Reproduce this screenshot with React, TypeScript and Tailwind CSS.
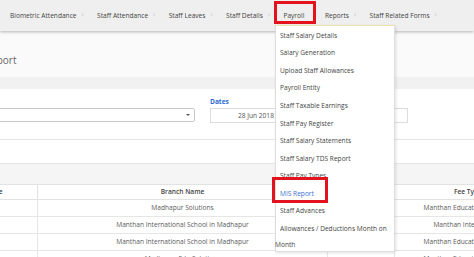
import React from "react";

const navItems = [
  "Biometric Attendance",
  "Staff Attendance",
  "Staff Leaves",
  "Staff Details",
  "Payroll",
  "Reports",
  "Staff Related Forms",
];

const menuItems = [
  "Staff Salary Details",
  "Salary Generation",
  "Upload Staff Allowances",
  "Payroll Entity",
  "Staff Taxable Earnings",
  "Staff Pay Register",
  "Staff Salary Statements",
  "Staff Salary TDS Report",
  "Staff Pay Types",
  "MIS Report",
  "Staff Advances",
];

const rows = [
  ["1", "Madhapur Solutions", "", "Manthan Educational Society"],
  ["2", "Manthan International School in Madhapur", "", "Manthan International"],
  ["3", "Manthan International School in Madhapur", "", "Manthan Educational Society"],
  ["4", "Madhapur Edu Solutions", "", "Manthan Educational Society"],
];

export default function App() {
  return (
    <div className="relative w-[474px] h-[257px] overflow-hidden bg-white font-['Open_Sans',sans-serif] text-[6.6px] text-[#444]">
      {/* Top nav */}
      <nav className="relative z-10 h-[31px] bg-[#efefef] shadow-[0_1px_3px_rgba(0,0,0,0.28)] flex items-center pl-[10px] gap-[13.5px]">
        {navItems.map((n) => (
          <div key={n} className="flex items-center whitespace-nowrap">
            <span>{n}</span>
            <span className={"ml-[5px] text-[7px] " + (n === "Payroll" ? "text-transparent" : "text-[#bdbdbd]")}>›</span>
          </div>
        ))}
      </nav>

      {/* Title area */}
      <div className="h-[46px] bg-[#fafafa] flex items-center pt-[12px]">
        <span className="ml-[-35px] text-[10px] text-[#666] whitespace-nowrap">MIS Report</span>
      </div>
      <div className="h-[12px] bg-[#f1f1f1]" />

      {/* Form */}
      <div className="h-[51px] bg-white border-b-[1.5px] border-[#e3e3e3] flex items-start gap-[15px] pt-[9px]">
        <div className="flex flex-col ml-[-28px] w-[223px]">
          <div className="h-[10px]" />
          <div className="h-[14px] border border-[#c9c9c9] rounded-[2px] bg-white flex items-center justify-end pr-[4px]">
            <span className="w-0 h-0 border-l-[2px] border-r-[2px] border-t-[2.5px] border-l-transparent border-r-transparent border-t-[#555]" />
          </div>
        </div>
        <div className="flex flex-col w-[198px]">
          <div className="h-[10px] text-[6.6px] font-bold text-[#2b6ad3] leading-[8px]">Dates</div>
          <div className="h-[15px] border border-[#dcdcdc] bg-white flex items-center">
            <span className="ml-[27px] text-[#555] whitespace-nowrap">28 Jun 2018 - 28 Jun 2018</span>
          </div>
        </div>
      </div>

      <div className="h-[23px] bg-white" />
      <div className="h-[21px] bg-[#f5f5f5] border-t border-[#e6e6e6]" />

      {/* Table */}
      <div className="ml-[-51px] w-[600px]">
        <div className="flex h-[16px] border-t border-b border-[#e2e2e2] font-semibold text-[#444]">
          <div className="w-[89px] flex items-center justify-center border-r border-[#e2e2e2]">Name</div>
          <div className="w-[290px] flex items-center justify-center border-r border-[#e2e2e2]">Branch Name</div>
          <div className="w-[67px] flex items-center justify-center border-r border-[#e2e2e2]">Entity</div>
          <div className="w-[146px] flex items-center justify-center">Fee Type</div>
        </div>
        {rows.map((r, i) => (
          <div key={i} className="flex h-[17px] border-b border-[#e6e6e6] text-[#5a5a5a]">
            <div className="w-[89px] flex items-center justify-center border-r border-[#e6e6e6]">{r[0]}</div>
            <div className="w-[290px] flex items-center justify-center border-r border-[#e6e6e6] whitespace-nowrap">{r[1]}</div>
            <div className="w-[67px] flex items-center justify-center border-r border-[#e6e6e6]">{r[2]}</div>
            <div className="w-[146px] flex items-center justify-center whitespace-nowrap">{r[3]}</div>
          </div>
        ))}
      </div>

      {/* Dropdown menu */}
      <div className="absolute z-20 left-[275px] top-[25px] w-[120px] h-[227px] bg-white border border-[#dedede] border-t-[#f0e2a8] shadow-[1px_1px_3px_rgba(0,0,0,0.12)] pt-[1px]">
        {menuItems.map((m) => (
          <div
            key={m}
            className={"h-[17.55px] flex items-center px-[4px] whitespace-nowrap " + (m === "MIS Report" ? "text-[#3b6fd4]" : "text-[#444]")}
          >
            {m}
          </div>
        ))}
        <div className="h-[17.55px] flex items-center px-[4px] whitespace-nowrap">Allowances / Deductions Month on</div>
        <div className="h-[15px] flex items-center ml-[-1px] whitespace-nowrap">Month</div>
      </div>

      {/* Annotation boxes */}
      <div className="absolute z-30 left-[274px] top-[1px] w-[42px] h-[23px] border-[3px] border-[#e3131d]" />
      <div className="absolute z-30 left-[272px] top-[177px] w-[56px] h-[26px] border-[3px] border-[#e3131d]" />
    </div>
  );
}
